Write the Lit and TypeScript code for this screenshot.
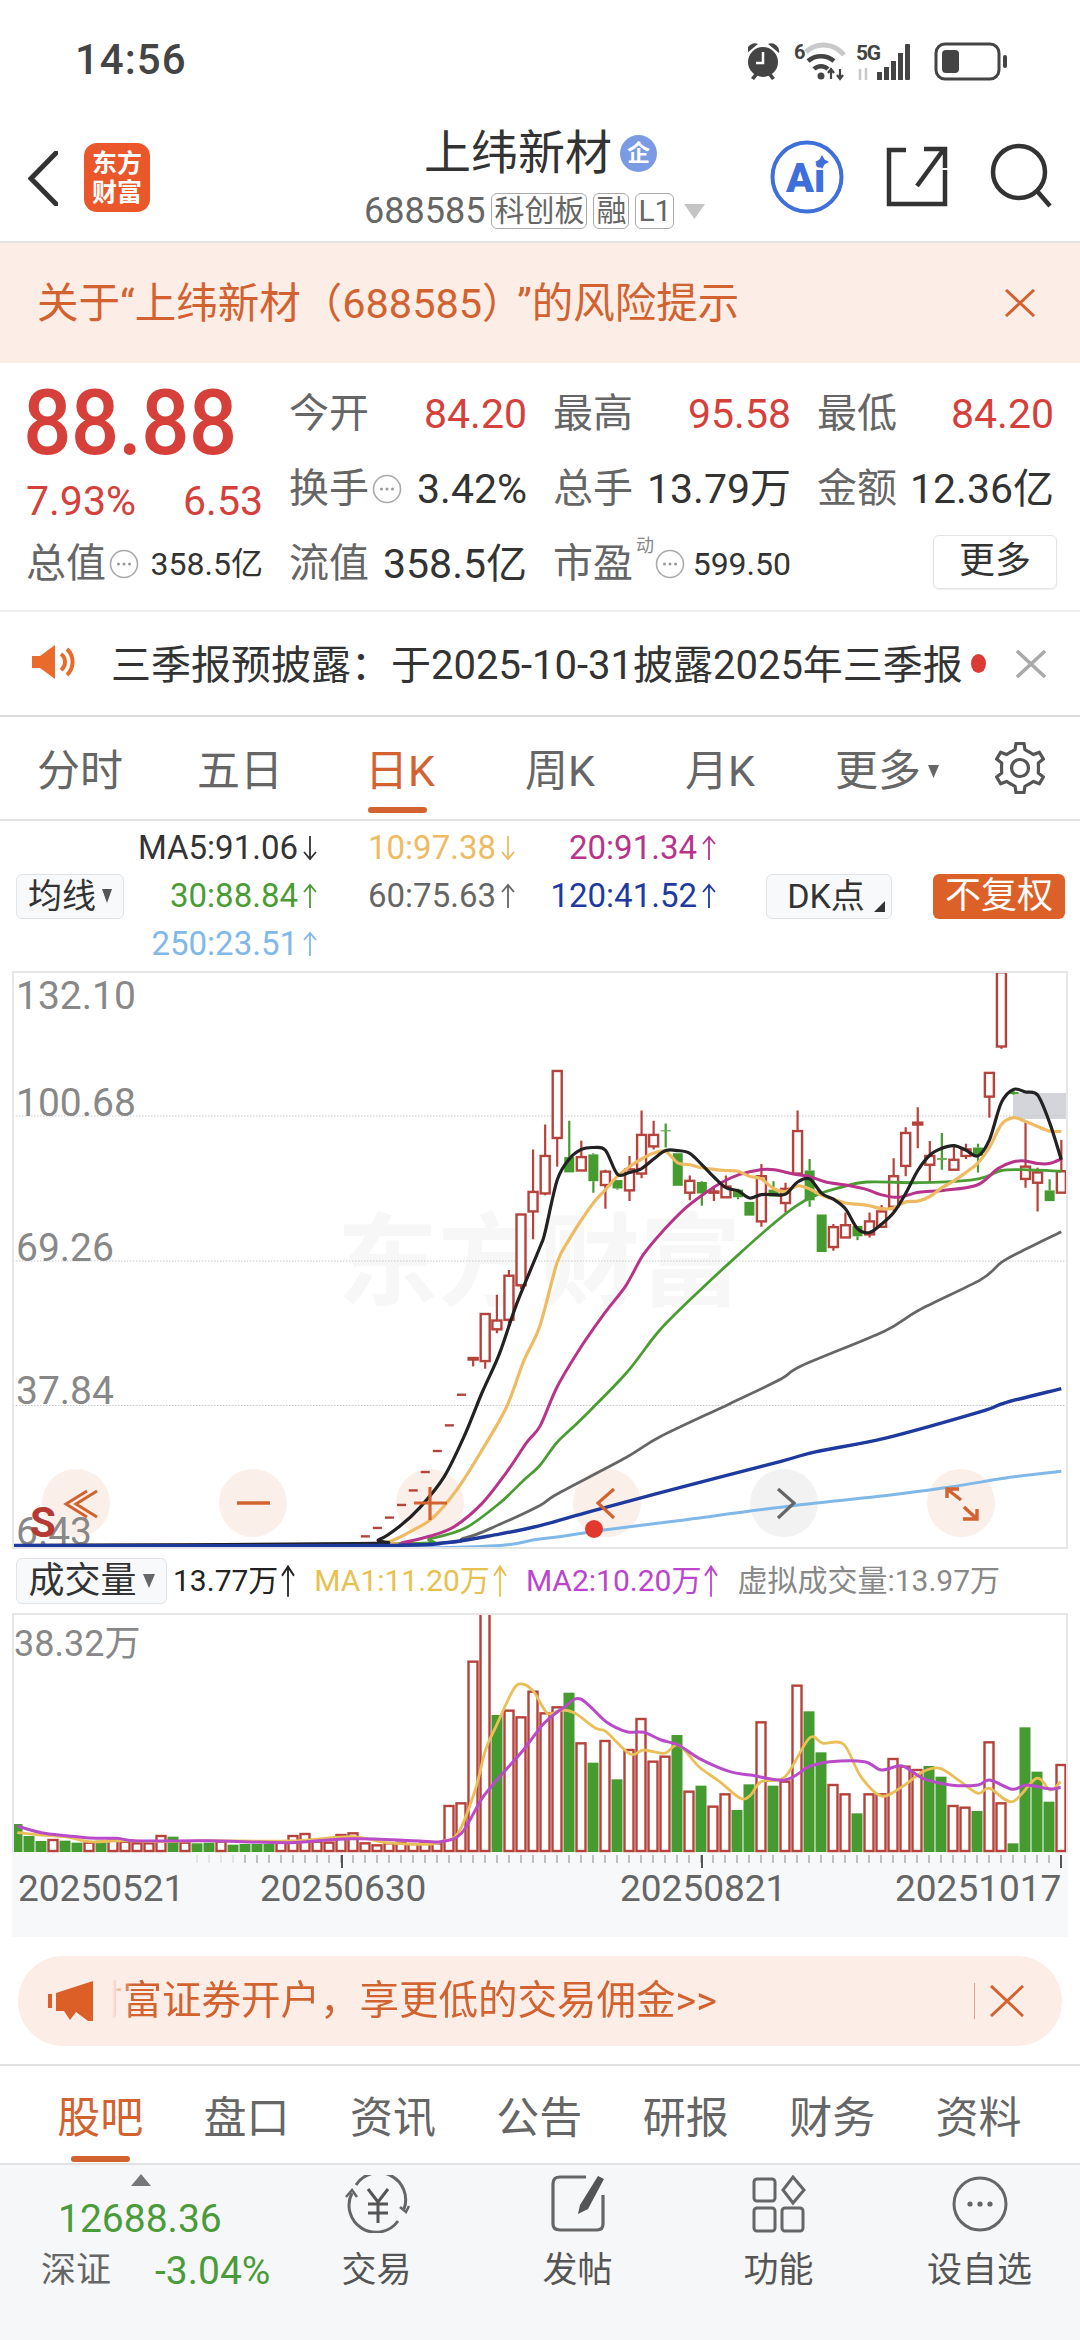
import { LitElement, html, css, svg } from "lit";
import { customElement } from "lit/decorators.js";

type Pt = [number, number];
type Candle = [number, number, number, number, number, string];

const RED = "#b5423b";
const GREEN = "#459a30";

const X3 = (v: number) => v / 2.904;
const X4 = (v: number) => 540 + v / 2.904;
const Y = (v: number) => 960 + v / 2.613;
const VX = (v: number) => v / 1.452;
const VY = (v: number) => 1550 + v / 3;

const left: Candle[] = [
  [1374, 1040, 1040, 1044, 1062, "r"],
  [1409, 925, 925, 1048, 1068, "r"],
  [1443, 875, 942, 965, 975, "r"],
  [1478, 810, 825, 940, 960, "r"],
  [1513, 665, 665, 850, 860, "r"],
  [1548, 495, 606, 657, 730, "r"],
];
const dashes: Pt[] = [[1061, 1506], [1096, 1484], [1131, 1457], [1166, 1424], [1200, 1386], [1235, 1338], [1270, 1283], [1305, 1216], [1340, 1136]];
const right: Candle[] = [
  [15, 430, 512, 610, 615, "r"], [50, 290, 290, 465, 540, "r"], [85, 420, 515, 555, 555, "g"],
  [120, 472, 515, 550, 550, "r"], [155, 505, 508, 578, 608, "g"], [190, 548, 553, 588, 650, "r"],
  [225, 575, 575, 597, 600, "g"], [260, 512, 547, 602, 630, "r"], [295, 393, 457, 558, 570, "r"],
  [330, 420, 457, 487, 495, "r"], [365, 427, 445, 447, 490, "g"], [400, 505, 505, 590, 590, "g"],
  [435, 563, 577, 608, 628, "r"], [470, 578, 580, 610, 642, "g"], [505, 590, 605, 608, 630, "r"],
  [540, 563, 592, 620, 622, "r"], [575, 598, 600, 620, 625, "g"], [608, 632, 632, 668, 668, "g"],
  [643, 533, 565, 683, 697, "r"], [678, 578, 600, 618, 618, "g"], [713, 582, 598, 635, 660, "r"],
  [748, 393, 447, 558, 560, "r"], [783, 520, 550, 628, 645, "g"], [818, 665, 665, 763, 763, "g"],
  [852, 690, 698, 750, 760, "r"], [887, 660, 693, 725, 725, "r"], [922, 695, 695, 722, 732, "g"],
  [957, 660, 683, 717, 725, "r"], [992, 640, 657, 697, 700, "r"], [1027, 518, 565, 645, 655, "r"],
  [1062, 437, 452, 538, 565, "r"], [1097, 385, 425, 430, 492, "r"], [1132, 473, 512, 535, 580, "r"],
  [1167, 452, 518, 522, 548, "g"], [1202, 485, 522, 548, 550, "r"], [1237, 480, 495, 512, 520, "r"],
  [1272, 480, 490, 512, 555, "g"], [1305, 295, 295, 357, 412, "r"], [1340, 32, 32, 226, 232, "r"],
  [1375, 340, 345, 350, 352, "g"], [1410, 420, 540, 572, 595, "r"], [1445, 543, 555, 582, 657, "r"],
  [1480, 573, 602, 630, 630, "g"], [1514, 470, 552, 608, 608, "r"],
];

const mk = (a: Pt[], b: Pt[]): Pt[] => [
  ...a.map(([x, y]) => [X3(x), Y(y)] as Pt),
  ...b.map(([x, y]) => [X4(x), Y(y)] as Pt),
];

const maLines: { color: string; w: number; pts: Pt[] }[] = [
  { color: "#80b8e8", w: 3, pts: mk([[50, 1536], [1300, 1535]], [[0, 1513], [180, 1490], [400, 1465], [740, 1425], [1000, 1400], [1170, 1380], [1380, 1350], [1514, 1336]]) },
  { color: "#666666", w: 2.8, pts: mk([[40, 1530], [1200, 1525], [1350, 1510], [1450, 1475]], [[0, 1425], [50, 1395], [250, 1300], [350, 1245], [550, 1160], [700, 1095], [760, 1060], [1000, 970], [1100, 915], [1280, 835], [1340, 790], [1400, 760], [1514, 710]]) },
  { color: "#4a9c33", w: 2.8, pts: mk([[40, 1530], [1150, 1526], [1250, 1512], [1350, 1485], [1450, 1420], [1520, 1360]], [[0, 1320], [50, 1260], [120, 1200], [250, 1080], [350, 965], [480, 850], [570, 775], [670, 695], [740, 645], [800, 615], [870, 595], [950, 580], [1100, 582], [1250, 575], [1300, 565], [1340, 550], [1400, 548], [1514, 552]]) },
  { color: "#b8338a", w: 3, pts: mk([[40, 1530], [1100, 1528], [1170, 1522], [1250, 1505], [1320, 1480], [1400, 1420], [1470, 1340], [1530, 1260]], [[0, 1218], [50, 1115], [120, 1010], [190, 920], [250, 850], [300, 770], [360, 705], [420, 650], [470, 615], [530, 580], [580, 560], [640, 548], [680, 548], [740, 560], [780, 565], [830, 580], [900, 590], [950, 600], [990, 613], [1040, 620], [1100, 607], [1170, 602], [1270, 588], [1330, 545], [1375, 527], [1410, 525], [1445, 532], [1480, 532], [1514, 520]]) },
  { color: "#efbb62", w: 3.2, pts: mk([[40, 1530], [1060, 1528], [1130, 1520], [1200, 1490], [1260, 1455], [1330, 1380], [1400, 1280], [1470, 1170], [1520, 1050]], [[0, 955], [50, 790], [85, 730], [120, 680], [155, 635], [190, 600], [225, 565], [260, 540], [295, 520], [330, 505], [365, 500], [400, 530], [435, 535], [470, 543], [505, 547], [540, 550], [575, 552], [608, 565], [643, 572], [678, 597], [713, 605], [748, 590], [783, 598], [818, 615], [852, 625], [887, 635], [922, 638], [957, 642], [992, 650], [1027, 648], [1062, 632], [1097, 630], [1132, 618], [1167, 595], [1202, 577], [1237, 555], [1272, 530], [1305, 490], [1340, 430], [1375, 412], [1410, 422], [1445, 435], [1480, 447], [1514, 448]]) },
  { color: "#222222", w: 3.2, pts: mk([[40, 1530], [1040, 1525], [1100, 1515], [1160, 1480], [1220, 1430], [1290, 1350], [1350, 1240], [1400, 1130], [1450, 1030], [1500, 900]], [[0, 750], [15, 710], [50, 575], [85, 520], [120, 495], [155, 490], [190, 497], [225, 560], [260, 555], [295, 545], [330, 520], [365, 498], [400, 498], [435, 505], [470, 535], [505, 567], [540, 595], [575, 603], [608, 622], [643, 613], [678, 613], [713, 612], [748, 580], [783, 572], [818, 610], [852, 625], [887, 650], [922, 702], [957, 712], [992, 690], [1027, 660], [1062, 610], [1097, 550], [1132, 510], [1167, 492], [1202, 485], [1237, 497], [1272, 512], [1305, 470], [1340, 372], [1375, 338], [1410, 345], [1445, 353], [1480, 425], [1514, 522]]) },
  { color: "#1f3a9e", w: 3.4, pts: mk([[14, 1530], [1100, 1530], [1300, 1522], [1450, 1500]], [[0, 1478], [150, 1440], [400, 1380], [700, 1310], [800, 1285], [1000, 1250], [1280, 1180], [1350, 1157], [1514, 1120]]) },
];

const volTops: [number, string][] = ([
  [822, "g"], [858, "g"], [873, "g"], [870, "r"], [872, "g"], [878, "g"], [878, "r"], [872, "g"], [872, "r"], [875, "r"],
  [880, "r"], [880, "r"], [858, "r"], [860, "g"], [878, "r"], [880, "g"], [878, "g"], [875, "r"], [884, "g"], [882, "g"],
  [882, "g"], [882, "g"], [878, "r"], [858, "r"], [852, "r"], [875, "r"], [878, "r"], [855, "r"], [850, "r"], [880, "r"],
  [886, "r"], [880, "r"], [878, "r"], [882, "r"], [880, "r"], [880, "r"], [768, "r"], [760, "r"], [335, "r"], [190, "r"],
  [495, "g"], [482, "r"], [502, "r"], [425, "r"], [490, "r"], [472, "r"], [428, "g"], [580, "r"], [638, "g"], [573, "r"],
  [688, "g"], [600, "r"], [507, "r"], [635, "r"], [620, "r"], [555, "g"], [725, "r"], [707, "g"], [770, "r"], [733, "r"],
  [780, "g"], [703, "g"], [517, "r"], [707, "g"], [695, "r"], [407, "r"], [484, "g"], [607, "g"], [705, "r"], [733, "r"],
  [790, "g"], [733, "r"], [733, "r"], [627, "r"], [650, "r"], [660, "r"], [648, "g"], [680, "g"], [768, "r"], [773, "r"],
  [783, "g"], [577, "r"], [760, "r"], [880, "g"], [532, "g"], [665, "g"], [755, "g"], [645, "r"],
] as [number, string][]);

const vol1: Pt[] = [[25, 848], [60, 855], [100, 862], [130, 875], [180, 872], [230, 875], [300, 872], [420, 873], [510, 860], [560, 878], [620, 883], [640, 875], [665, 850], [690, 720], [705, 600], [720, 530], [745, 420], [758, 402], [775, 425], [795, 490], [815, 480], [835, 490], [865, 535], [880, 545], [915, 612], [935, 600], [965, 610], [985, 585], [1015, 650], [1045, 695], [1075, 745], [1090, 735], [1105, 695], [1140, 680], [1175, 565], [1195, 580], [1225, 583], [1250, 680], [1280, 738], [1310, 710], [1340, 665], [1365, 655], [1395, 695], [1420, 730], [1437, 715], [1470, 755], [1505, 685], [1525, 720], [1540, 695]];
const vol2: Pt[] = [[25, 828], [60, 848], [100, 858], [130, 864], [170, 865], [200, 873], [300, 872], [420, 878], [510, 866], [600, 872], [640, 875], [670, 850], [700, 745], [730, 670], [760, 600], [790, 520], [820, 470], [843, 447], [880, 515], [910, 545], [935, 547], [960, 570], [985, 585], [1015, 625], [1060, 665], [1090, 675], [1140, 690], [1175, 650], [1205, 635], [1255, 635], [1280, 660], [1310, 648], [1340, 685], [1380, 705], [1420, 705], [1437, 690], [1470, 718], [1490, 705], [1525, 717], [1540, 712]];

function smooth(p: Pt[]): string {
  let d = `M${p[0][0].toFixed(1)} ${p[0][1].toFixed(1)}`;
  for (let i = 0; i < p.length - 1; i++) {
    const a = p[Math.max(0, i - 1)], b = p[i], c = p[i + 1], e = p[Math.min(p.length - 1, i + 2)];
    const t = 0.16;
    d += `C${(b[0] + (c[0] - a[0]) * t).toFixed(1)} ${(b[1] + (c[1] - a[1]) * t).toFixed(1)} ${(c[0] - (e[0] - b[0]) * t).toFixed(1)} ${(c[1] - (e[1] - b[1]) * t).toFixed(1)} ${c[0].toFixed(1)} ${c[1].toFixed(1)}`;
  }
  return d;
}

function gearPath(cx: number, cy: number): string {
  const pts: string[] = [];
  const n = 6;
  for (let i = 0; i < n; i++) {
    const a = (i / n) * Math.PI * 2 - Math.PI / 2;
    const w = 0.26, v = 0.30;
    const list: [number, number][] = [[a - w - v, 18.5], [a - w, 19], [a - w * 0.62, 25], [a + w * 0.62, 25], [a + w, 19], [a + w + v - 0.001, 18.5]];
    list.forEach(([g, r]) => pts.push(`${(cx + Math.cos(g) * r).toFixed(1)} ${(cy + Math.sin(g) * r).toFixed(1)}`));
  }
  return "M" + pts.join("L") + "Z";
}

const arrow = (up: boolean) => html`<svg class="arr" viewBox="0 0 16 26" preserveAspectRatio="none">
  ${up
    ? svg`<path d="M8 25V2M2 9L8 2L14 9" fill="none" stroke="currentColor" stroke-width="1.8"/>`
    : svg`<path d="M8 1V24M2 17L8 24L14 17" fill="none" stroke="currentColor" stroke-width="1.8"/>`}
</svg>`;

const dots = html`<svg class="dots" viewBox="0 0 30 30">
  <circle cx="15" cy="15" r="13.5" fill="none" stroke="#aaa" stroke-width="1.6"/>
  <circle cx="9.5" cy="15" r="1.5" fill="#999"/><circle cx="15" cy="15" r="1.5" fill="#999"/><circle cx="20.5" cy="15" r="1.5" fill="#999"/>
</svg>`;

@customElement("app-root")
export class AppRoot extends LitElement {
  static styles = css`
    :host { display: block; width: 1080px; height: 2340px; overflow: hidden; background: #fff; color: #333;
      font-family: Roboto, "Noto Sans CJK SC", sans-serif; }
    * { box-sizing: border-box; }
    svg { display: block; flex: none; }
    .status { height: 100px; display: flex; align-items: flex-start; padding: 36px 0 0 75px; justify-content: space-between; }
    .time { font-size: 42px; line-height: 48px; font-weight: 500; color: #444; letter-spacing: 1px; }
    .sicons { margin: 3px 68px 0 0; }
    .nav { height: 143px; border-bottom: 2px solid #e2e2e2; display: grid; grid-template-columns: 364px 347px 1fr; }
    .navl { display: flex; align-items: flex-start; padding: 43px 0 0 28px; gap: 26px; }
    .back { margin-top: 8px; }
    .logo { width: 66px; height: 69px; border-radius: 13px; background: #e9572a; color: #fff; font-size: 25px; line-height: 29px; font-weight: 700;
      display: flex; flex-direction: column; align-items: center; justify-content: center; }
    .navm { display: flex; flex-direction: column; }
    .title { margin-top: 24px; padding-left: 60px; display: flex; align-items: center; gap: 8px; font-size: 47px; line-height: 58px; color: #333; height: 58px; }
    .ent { width: 37px; height: 37px; border-radius: 50%; background: #7a9be4; color: #fff; font-size: 23px; display: flex; align-items: center; justify-content: center; font-weight: 700; line-height: 1; }
    .code { display: flex; align-items: center; margin-top: 10px; color: #666; font-size: 36px; line-height: 38px; }
    .tag { border: 1.5px solid #aaa; border-radius: 6px; font-size: 30px; line-height: 33px; height: 36px; padding: 0 2px; color: #666; white-space: nowrap; margin-left: 6px; }
    .tri { margin-left: 10px; }
    .navr { padding: 40px 0 0 59px; }
    .navr svg { overflow: visible; }
    .banner { height: 120px; background: #fcede6; display: flex; align-items: center; justify-content: space-between; padding: 0 44px 6px 37px; color: #d2622f; font-size: 41.5px; }
    .banner svg { margin-top: 6px; }
    .pr { margin-right: 14px; }
    .quote { height: 249px; border-bottom: 2px solid #eee; padding: 13px 26px 0; display: grid; grid-template-columns: 237px 238px 238px 237px; grid-template-rows: repeat(3, 75px); column-gap: 26px; align-items: center; }
    .price { font-size: 90px; line-height: 90px; font-weight: 500; color: #d5403a; letter-spacing: -1px; margin: 20px 0 0 -3px; transform: scaleX(0.95); transform-origin: left center; white-space: nowrap; }
    .chg { display: flex; justify-content: space-between; color: #d5403a; font-size: 41px; line-height: 48px; margin-top: 24px; }
    .cell { display: flex; justify-content: space-between; align-items: center; font-size: 41px; line-height: 48px; color: #333; white-space: nowrap; }
    .lab { font-size: 40px; color: #666; display: inline-flex; align-items: center; gap: 3px; }
    .r { color: #d5403a; }
    .sm { font-size: 32px; }
    .dots { width: 30px; height: 30px; }
    .sup { font-size: 18px; line-height: 20px; color: #888; align-self: flex-start; margin: -4px -2px 0 0; }
    .more { flex: none; width: 124px; height: 54px; border: 1.5px solid #e4e4e4; border-radius: 6px; font-size: 36px; line-height: 50px; text-align: center; color: #333; box-shadow: 0 1px 2px #eee; margin: -4px 0 0 116px; }
    .notice { height: 105px; border-bottom: 2px solid #ddd; display: flex; align-items: center; padding: 0 0 4px 31px; font-size: 40px; color: #333; white-space: nowrap; }
    .ntxt { margin-left: 32px; width: 845px; }
    .ndot { width: 15px; height: 19px; border-radius: 50%; background: #dd3a34; margin: 4px 0 0 15px; }
    .nx { margin: 4px 0 0 30px; }
    .tabs { height: 104px; border-bottom: 2px solid #e2e2e2; display: grid; grid-template-columns: repeat(6, 160px) 120px; align-items: start; }
    .tab { position: relative; font-size: 43px; line-height: 56px; margin-top: 26px; text-align: center; color: #666; display: flex; justify-content: center; align-items: center; gap: 7px; }
    .tab.on { color: #d2622f; }
    .tab.on::after { content: ""; position: absolute; left: 48px; width: 59px; top: 64px; height: 6px; border-radius: 3px; background: #d2622f; }
    .tab.mo { padding-left: 14px; }
    .gear { margin-top: 25px; display: flex; justify-content: center; }
    .ma { height: 150px; padding-top: 3px; display: grid; grid-template-columns: 318px 198px 201px 1fr; grid-template-rows: repeat(3, 48px); align-items: center; font-size: 33px; }
    .mi { display: flex; align-items: center; justify-content: flex-end; gap: 4px; white-space: nowrap; line-height: 40px; }
    .arr { width: 16px; height: 26px; }
    .mi.btnc { justify-content: space-between; padding-left: 16px; }
    .btn { height: 45px; border: 1.5px solid #e2e3e6; border-radius: 6px; background: #f8f9fb; color: #333; font-size: 34px; line-height: 40px; display: flex; align-items: center; justify-content: center; gap: 6px; white-space: nowrap; }
    .bma { width: 108px; }
    .ctrl { display: flex; justify-content: space-between; padding: 0 15px 0 49px; }
    .bdk { width: 126px; position: relative; padding-right: 6px; }
    .bdk::after { content: ""; position: absolute; right: 6px; bottom: 6px; border-style: solid; border-width: 0 0 11px 11px; border-color: transparent transparent #333 transparent; }
    .bfq { width: 132px; height: 45px; background: #dc6128; border-radius: 6px; color: #fff; font-size: 36px; line-height: 45px; text-align: center; }
    .chart { margin: 0 12px; height: 578px; }
    .lbl { font-size: 39px; fill: #888; }
    .wm { font-size: 101px; font-weight: 700; fill: #f7f7f7; font-family: "Noto Sans CJK SC", sans-serif; }
    .ss { font-size: 42px; font-weight: 700; fill: #b53a34; }
    .vh { height: 64px; padding: 9px 0 0 16px; display: flex; align-items: flex-start; font-size: 30px; white-space: nowrap; }
    .bvol { width: 151px; height: 46px; font-size: 36px; margin-right: 6px; }
    .vi { display: flex; align-items: center; gap: 2px; margin-right: 18px; height: 46px; line-height: 46px; }
    .vi .arr { height: 34px; }
    .vol { margin: 0 12px; height: 324px; }
    .ax { font-size: 37px; fill: #666; }
    .vlab { font-size: 36px; fill: #888; }
    .ad { margin: 19px 18px 0; height: 90px; border-radius: 45px; background: #fcede6; display: flex; align-items: center; padding-left: 30px; color: #d2622f; font-size: 39.5px; }
    .adt { width: 700px; margin-left: 18px; overflow: hidden; white-space: nowrap; line-height: 50px; -webkit-mask-image: linear-gradient(90deg, transparent 0, #000 20px); mask-image: linear-gradient(90deg, transparent 0, #000 20px); }
    .adt span { margin-left: -29px; display: inline-block; }
    .addiv { width: 1px; height: 36px; background: #d9a78f; margin-left: 162px; }
    .adx { margin-left: 15px; }
    .tabs2 { margin-top: 18px; height: 101px; border-top: 2px solid #e2e2e2; border-bottom: 2px solid #e2e2e2; padding-left: 27px; display: grid; grid-template-columns: repeat(7, 146.4px); }
    .t2 { position: relative; font-size: 43px; line-height: 56px; margin-top: 24px; text-align: center; color: #666; }
    .t2.on { color: #d2622f; }
    .t2.on::after { content: ""; position: absolute; left: 44px; width: 59px; top: 66px; height: 6px; border-radius: 3px; background: #d2622f; }
    .bot { height: 175px; background: #f6f7f9; display: grid; grid-template-columns: 276px repeat(4, 201px); }
    .idx { padding: 9px 0 0 41px; }
    .idxv { font-size: 39px; line-height: 46px; color: #4b9b3a; margin: 10px 0 0 17px; }
    .idxr { display: flex; align-items: center; margin-top: 6px; font-size: 35px; line-height: 46px; color: #666; white-space: nowrap; }
    .idxr b { font-weight: 400; color: #4b9b3a; margin-left: 44px; font-size: 39px; }
    .idxt { margin-left: 90px; }
    .act { display: flex; flex-direction: column; align-items: center; padding-top: 10px; font-size: 35px; color: #555; }
    .act span { margin-top: 16px; line-height: 44px; }
  `;

  render() {
    const candles = [
      ...left.map(c => [X3(c[0]), ...c.slice(1)] as Candle),
      ...right.map(c => [X4(c[0]), ...c.slice(1)] as Candle),
    ];
    const circles: [number, string][] = [[76, "o"], [253, "o"], [430, "o"], [607, "o"], [784, "g"], [961, "o"]];
    const n = volTops.length;
    const ticks: number[] = [];
    for (let x = 1061; x >= 196; x -= 12) ticks.push(x);
    return html`
      <div class="status">
        <div class="time">14:56</div>
        <svg class="sicons" width="264" height="44" viewBox="748 38 264 44">
          <g fill="#444">
            <circle cx="763" cy="61" r="15"/>
            <path d="M747 52a8 8 0 0 1 11-9zM779 52a8 8 0 0 0-11-9zM751 77l4-5 3 2-4 5zM775 77l-4-5-3 2 4 5z"/>
            <path d="M763 51v11h-7" fill="none" stroke="#fff" stroke-width="2.5"/>
          </g>
          <path d="M806 51a26 26 0 0 1 38 3" fill="none" stroke="#c9c9c9" stroke-width="5"/>
          <path d="M808 60a20 20 0 0 1 26 0M814 68a10 10 0 0 1 14 0" fill="none" stroke="#444" stroke-width="4.5"/>
          <circle cx="821" cy="75" r="3.5" fill="#444"/>
          <path d="M831 78V68M828 72l3-4 3 4M840 68v10M837 74l3 4 3-4" fill="none" stroke="#444" stroke-width="2.2"/>
          <text x="794" y="58" font-size="20" font-weight="700" fill="#444">6</text>
          <text x="856" y="59" font-size="21" font-weight="700" fill="#444" textLength="25">5G</text>
          <path d="M860 68V79M866 67v12" stroke="#c8c8c8" stroke-width="2.5"/>
          <g fill="#444"><rect x="877" y="71" width="5" height="8"/><rect x="884" y="66" width="5" height="13"/><rect x="891" y="60" width="5" height="19"/><rect x="898" y="52" width="5" height="27"/><rect x="905" y="43" width="5" height="36" rx="1"/></g>
          <rect x="936" y="43" width="63" height="35" rx="9" fill="none" stroke="#444" stroke-width="3"/>
          <rect x="942" y="49" width="17" height="23" rx="4" fill="#444"/>
          <rect x="1003" y="54" width="4" height="13" rx="2" fill="#444"/>
        </svg>
      </div>

      <div class="nav">
        <div class="navl">
          <svg class="back" width="30" height="55" viewBox="0 0 30 55"><path d="M28 2L3 27.5L28 53" fill="none" stroke="#333" stroke-width="5" stroke-linecap="round"/></svg>
          <div class="logo"><div>东方</div><div>财富</div></div>
        </div>
        <div class="navm">
          <div class="title">上纬新材<div class="ent">企</div></div>
          <div class="code">688585
            <span class="tag">科创板</span><span class="tag">融</span><span class="tag">L1</span>
            <svg class="tri" width="21" height="15" viewBox="0 0 21 15"><path d="M0 0H21L10.5 15Z" fill="#c4c4c4"/></svg>
          </div>
        </div>
        <div class="navr">
          <svg width="290" height="70" viewBox="770 140 290 70">
            <circle cx="807" cy="177" r="34.5" fill="none" stroke="#3f6fdb" stroke-width="4"/>
            <text x="786" y="192" font-size="41" font-weight="900" fill="#3f6fdb">Ai</text>
            <path d="M822 155l2.5 4.5 4.5 2.5-4.5 2.5-2.5 4.5-2.5-4.5-4.5-2.5 4.5-2.5z" fill="#3f6fdb"/>
            <path d="M906 150H889V204H945V170M917 186L944 149M924 149H945V168" fill="none" stroke="#333" stroke-width="4.5"/>
            <circle cx="1019" cy="172" r="26" fill="none" stroke="#333" stroke-width="4.5"/>
            <path d="M1037 191L1050 206" stroke="#333" stroke-width="4.5"/>
          </svg>
        </div>
      </div>

      <div class="banner">
        <div>关于“上纬新材（688585）<span class="pr"></span>”的风险提示</div>
        <svg width="32" height="28" viewBox="0 0 32 28"><path d="M2 1L30 27M30 1L2 27" stroke="#d2622f" stroke-width="3" fill="none"/></svg>
      </div>

      <div class="quote">
        <div class="price">88.88</div>
        <div class="cell"><span class="lab">今开</span><span class="r">84.20</span></div>
        <div class="cell"><span class="lab">最高</span><span class="r">95.58</span></div>
        <div class="cell"><span class="lab">最低</span><span class="r">84.20</span></div>
        <div class="chg"><span>7.93%</span><span>6.53</span></div>
        <div class="cell"><span class="lab">换手${dots}</span><span>3.42%</span></div>
        <div class="cell"><span class="lab">总手</span><span>13.79万</span></div>
        <div class="cell"><span class="lab">金额</span><span>12.36亿</span></div>
        <div class="cell"><span class="lab">总值${dots}</span><span class="sm">358.5亿</span></div>
        <div class="cell"><span class="lab">流值</span><span>358.5亿</span></div>
        <div class="cell"><span class="lab">市盈<span class="sup">动</span>${dots}</span><span class="sm">599.50</span></div>
        <div class="cell"><div class="more">更多</div></div>
      </div>

      <div class="notice">
        <svg width="48" height="36" viewBox="0 0 48 36">
          <path d="M1 12H9L24 1V35L9 24H1Z" fill="#ea6a2c"/>
          <path d="M30 10a10 10 0 0 1 0 16M36 5a18 18 0 0 1 0 26" fill="none" stroke="#ea6a2c" stroke-width="4"/>
        </svg>
        <div class="ntxt">三季报预披露：于2025-10-31披露2025年三季报</div>
        <div class="ndot"></div>
        <svg class="nx" width="30" height="28" viewBox="0 0 30 28"><path d="M1 1L29 27M29 1L1 27" stroke="#aaa" stroke-width="3.5" fill="none"/></svg>
      </div>

      <div class="tabs">
        <div class="tab">分时</div>
        <div class="tab">五日</div>
        <div class="tab on">日K</div>
        <div class="tab">周K</div>
        <div class="tab">月K</div>
        <div class="tab mo">更多<svg width="11" height="13" viewBox="0 0 11 13"><path d="M0 0H11L5.5 13Z" fill="#666"/></svg></div>
        <div class="gear"><svg width="52" height="52" viewBox="0 0 52 52"><path d="${gearPath(26, 26)}" fill="none" stroke="#555" stroke-width="3.2" stroke-linejoin="round"/><circle cx="26" cy="26" r="8.5" fill="none" stroke="#555" stroke-width="3.2"/></svg></div>
      </div>

      <div class="ma">
        <div class="mi" style="color:#333">MA5:91.06${arrow(false)}</div>
        <div class="mi" style="color:#efbb62">10:97.38${arrow(false)}</div>
        <div class="mi" style="color:#b8338a">20:91.34${arrow(true)}</div>
        <div></div>
        <div class="mi btnc"><div class="btn bma">均线<svg width="10" height="14" viewBox="0 0 10 14"><path d="M0 0H10L5 14Z" fill="#555"/></svg></div><div class="mi" style="color:#4a9c33">30:88.84${arrow(true)}</div></div>
        <div class="mi" style="color:#666">60:75.63${arrow(true)}</div>
        <div class="mi" style="color:#1f3a9e">120:41.52${arrow(true)}</div>
        <div class="ctrl"><div class="btn bdk">DK点</div><div class="bfq">不复权</div></div>
        <div class="mi" style="color:#80b8e8">250:23.51${arrow(true)}</div>
      </div>

      <svg class="chart" width="1056" height="578" viewBox="12 971 1056 578">
        <text class="wm" x="337" y="1298">东方财富</text>
        <rect x="1013" y="1093" width="54" height="26" fill="#d3d5db"/>
        ${[1116, 1261, 1405.5].map(y => svg`<path d="M13 ${y}H1067" stroke="#c9c9c9" stroke-width="1" stroke-dasharray="1.5 1.5"/>`)}
        ${circles.map(([x, c]) => svg`<circle cx="${x}" cy="1503" r="34" fill="${c === "g" ? "#f1f1f1" : "#fbeee7"}" fill-opacity="0.92"/>`)}
        <text class="lbl" x="16" y="1009">132.10</text>
        <text class="lbl" x="16" y="1116">100.68</text>
        <text class="lbl" x="16" y="1261">69.26</text>
        <text class="lbl" x="16" y="1404">37.84</text>
        <text class="lbl" x="16" y="1545">6.43</text>
        ${dashes.map(([x, y]) => svg`<path d="M${X3(x) - 4.5} ${Y(y)}H${X3(x) + 4.5}" stroke="${RED}" stroke-width="2.4"/>`)}
        ${candles.map(([x, wt, bt, bb, wb, c]) => {
          const col = c === "r" ? RED : GREEN;
          const h = Math.max(Y(bb) - Y(bt), 1);
          return svg`
            <path d="M${x} ${Y(wt)}V${Y(bt)}M${x} ${Y(bb)}V${Y(wb)}" stroke="${col}" stroke-width="2.2"/>
            ${c === "r"
              ? svg`<rect x="${x - 4.5}" y="${Y(bt)}" width="9" height="${h}" fill="#fff" stroke="${col}" stroke-width="2.4"/>`
              : svg`<rect x="${x - 5}" y="${Y(bt)}" width="10" height="${h}" fill="${col}"/>`}`;
        })}
        ${maLines.map(l => svg`<path d="${smooth(l.pts)}" fill="none" stroke="${l.color}" stroke-width="${l.w}" stroke-linejoin="round"/>`)}
        <path d="M87 1491L66 1504L87 1517M97 1491L76 1504L97 1517" fill="none" stroke="#d2622f" stroke-width="3"/>
        <path d="M237 1503H270" stroke="#d2622f" stroke-width="3.5"/>
        <path d="M414 1503H447M430 1487V1520" stroke="#d2622f" stroke-width="3.2"/>
        <path d="M614 1489L598 1503L614 1518" fill="none" stroke="#d2622f" stroke-width="3.2"/>
        <path d="M778 1489L794 1503L778 1518" fill="none" stroke="#666" stroke-width="3.2"/>
        <path d="M947 1498V1489H959M947 1489L961 1500M977 1509V1519H963M977 1519L964 1507" fill="none" stroke="#d2622f" stroke-width="3.4"/>
        <circle cx="594" cy="1529" r="9" fill="#e03a2e"/>
        <text class="ss" x="30" y="1537">S</text>
        <rect x="13" y="972" width="1054" height="576" fill="none" stroke="#e6e6e6" stroke-width="2"/>
      </svg>

      <div class="vh">
        <div class="btn bvol">成交量<svg width="12" height="14" viewBox="0 0 12 14"><path d="M0 0H12L6 14Z" fill="#666"/></svg></div>
        <div class="vi" style="color:#222">13.77万${arrow(true)}</div>
        <div class="vi" style="color:#e8c04f">MA1:11.20万${arrow(true)}</div>
        <div class="vi" style="color:#bb45cc">MA2:10.20万${arrow(true)}</div>
        <div class="vi" style="color:#888">虚拟成交量:13.97万</div>
      </div>

      <svg class="vol" width="1056" height="324" viewBox="12 1613 1056 324">
        <rect x="12" y="1852" width="1056" height="85" fill="#f7f8fa"/>
        ${volTops.map(([t, c], i) => {
          const x = 1061 - 12 * (n - 1 - i);
          const y = VY(t);
          return c === "r"
            ? svg`<rect x="${x - 4.5}" y="${y}" width="9" height="${1851 - y}" fill="#fff" stroke="${RED}" stroke-width="2.4"/>`
            : svg`<rect x="${x - 5.5}" y="${y}" width="11" height="${1852 - y}" fill="${GREEN}"/>`;
        })}
        <path d="${smooth(vol1.map(([x, y]) => [VX(x), VY(y)] as Pt))}" fill="none" stroke="#ebbf58" stroke-width="2.8"/>
        <path d="${smooth(vol2.map(([x, y]) => [VX(x), VY(y)] as Pt))}" fill="none" stroke="#b94bc9" stroke-width="3"/>
        <path d="M13 1613V1852M1067 1613V1852M12 1614H1068" fill="none" stroke="#e6e6e6" stroke-width="2"/>
        ${ticks.map(x => svg`<path d="M${x} 1855V1863" stroke="${x < 240 ? "#ddd" : "#aaa"}" stroke-width="1.4"/>`)}
        ${[342, 702, 1061].map(x => svg`<path d="M${x} 1855V1868" stroke="#555" stroke-width="2"/>`)}
        <text class="vlab" x="14" y="1656">38.32万</text>
        <text class="ax" x="18" y="1901">20250521</text>
        <text class="ax" x="260" y="1901">20250630</text>
        <text class="ax" x="620" y="1901">20250821</text>
        <text class="ax" x="895" y="1901">20251017</text>
      </svg>

      <div class="ad">
        <svg width="46" height="40" viewBox="0 0 46 40"><path d="M0 13H4V27H0ZM8 12L45 0V40H40L28 31 22 39 16 30H8Z" fill="#dc5f27"/></svg>
        <div class="adt"><span>财富证券开户，享更低的交易佣金&gt;&gt;</span></div>
        <div class="addiv"></div>
        <svg class="adx" width="34" height="32" viewBox="0 0 34 32"><path d="M1 1L33 31M33 1L1 31" stroke="#d2622f" stroke-width="3" fill="none"/></svg>
      </div>

      <div class="tabs2">
        <div class="t2 on">股吧</div><div class="t2">盘口</div><div class="t2">资讯</div><div class="t2">公告</div><div class="t2">研报</div><div class="t2">财务</div><div class="t2">资料</div>
      </div>

      <div class="bot">
        <div class="idx">
          <svg class="idxt" width="20" height="12" viewBox="0 0 20 12"><path d="M10 0L20 12H0Z" fill="#777"/></svg>
          <div class="idxv">12688.36</div>
          <div class="idxr">深证<b>-3.04%</b></div>
        </div>
        <div class="act">
          <svg width="66" height="58" viewBox="0 0 66 58">
            <path d="M12 10A27 27 0 0 1 60 34M54 46A27 27 0 0 1 8 18" fill="none" stroke="#666" stroke-width="3"/>
            <path d="M2 22L8 15 13 22M56 32L62 37 65 31" fill="none" stroke="#666" stroke-width="2.5"/>
            <path d="M24 14L34 27 44 14M24 29H44M24 38H44M34 27V48" fill="none" stroke="#555" stroke-width="3"/>
          </svg>
          <span>交易</span>
        </div>
        <div class="act">
          <svg width="54" height="58" viewBox="0 0 54 58">
            <path d="M35 2H9Q2 2 2 9V49Q2 55 9 55H46Q52 55 52 49V20" fill="none" stroke="#666" stroke-width="3.2"/>
            <path d="M47 1L53 4 37 34 27 39 29 30Z" fill="#555"/>
          </svg>
          <span>发帖</span>
        </div>
        <div class="act">
          <svg width="54" height="58" viewBox="0 0 54 58" fill="none" stroke="#666" stroke-width="3">
            <rect x="2" y="4" width="21" height="22" rx="3"/>
            <path d="M41 2L52 15 41 28 31 15Z"/>
            <rect x="2" y="33" width="21" height="23" rx="3"/>
            <rect x="30" y="33" width="21" height="23" rx="3"/>
          </svg>
          <span>功能</span>
        </div>
        <div class="act">
          <svg width="56" height="58" viewBox="0 0 56 58">
            <circle cx="28" cy="29" r="26" fill="none" stroke="#666" stroke-width="3"/>
            <circle cx="18" cy="29" r="2.6" fill="#666"/><circle cx="28" cy="29" r="2.6" fill="#666"/><circle cx="38" cy="29" r="2.6" fill="#666"/>
          </svg>
          <span>设自选</span>
        </div>
      </div>
    `;
  }
}
